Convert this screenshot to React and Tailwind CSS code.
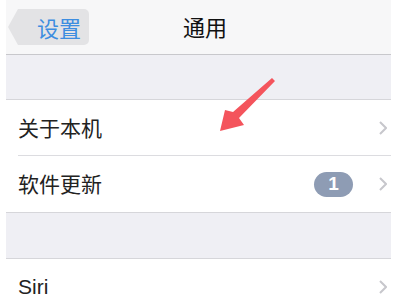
import React from "react";

const font = { fontFamily: '"Noto Sans CJK SC", "Noto Sans", sans-serif' };

function Chevron() {
  return (
    <svg width="8" height="14" viewBox="0 0 8 14" className="shrink-0">
      <path d="M1 1 L7 7 L1 13" fill="none" stroke="#c7c7cc" strokeWidth="2" />
    </svg>
  );
}

function Row({ label, badge, sep, latin }) {
  return (
    <div className="relative flex h-[56px] items-center bg-white pl-[12px] pr-[4px]">
      <span
        className={`flex-1 text-[#222] ${latin ? "text-[21px]" : "text-[21px]"}`}
        style={latin ? { fontFamily: '"Liberation Sans", sans-serif' } : undefined}
      >
        {label}
      </span>
      {badge && (
        <span className="mr-[26px] flex h-[25px] w-[39px] items-center justify-center rounded-full bg-[#8e9cb4] text-[19px] font-bold text-white" style={{ fontFamily: '"Liberation Sans", sans-serif' }}>
          {badge}
        </span>
      )}
      <Chevron />
      {sep && <div className="absolute bottom-0 left-[12px] right-0 h-px bg-[#dcdce0]" />}
    </div>
  );
}

export default function App() {
  return (
    <div className="relative h-[300px] w-[400px] overflow-hidden bg-white" style={font}>
      <div className="ml-[6px] w-[385px]">
        <div className="flex h-[55px] items-center border-b border-[#c8c8cc] bg-[#f7f7f8]">
          <div className="flex items-center pl-[2px]">
            <svg width="10" height="36" viewBox="0 0 10 36" className="shrink-0">
              <path d="M10 0 L0 18 L10 36 Z" fill="#e3e3e5" />
            </svg>
            <div className="flex h-[36px] w-[71px] items-center rounded-r-[5px] bg-[#e3e3e5] pl-[19px] text-[22px] text-[#3d8de0]">
              设置
            </div>
          </div>
        </div>
        <div className="h-[45px] border-b border-[#d6d6da] bg-[#efeff4]" />
        <Row label="关于本机" sep />
        <Row label="软件更新" badge="1" />
        <div className="h-[47px] border-y border-[#d6d6da] bg-[#efeff4]" />
        <Row label="Siri" latin />
      </div>
      <div className="absolute left-[183px] top-[10px] text-[22px] text-[#111]">通用</div>
      <svg className="absolute left-0 top-0" width="400" height="300" viewBox="0 0 400 300">
        <path d="M272 78 L233 112 L225 110 L220 131 L244 125 L239 118 L275 81 Z" fill="#f4545c" />
      </svg>
    </div>
  );
}
